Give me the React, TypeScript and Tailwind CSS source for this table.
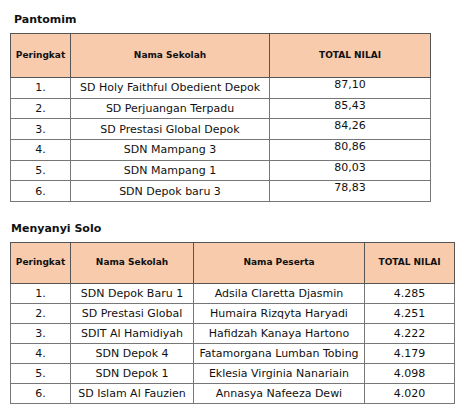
const pantomim = [
  ['1.', 'SD Holy Faithful Obedient Depok', '87,10'],
  ['2.', 'SD Perjuangan Terpadu', '85,43'],
  ['3.', 'SD Prestasi Global Depok', '84,26'],
  ['4.', 'SDN Mampang 3', '80,86'],
  ['5.', 'SDN Mampang 1', '80,03'],
  ['6.', 'SDN Depok baru 3', '78,83'],
]

const solo = [
  ['1.', 'SDN Depok Baru 1', 'Adsila Claretta Djasmin', '4.285'],
  ['2.', 'SD Prestasi Global', 'Humaira Rizqyta Haryadi', '4.251'],
  ['3.', 'SDIT Al Hamidiyah', 'Hafidzah Kanaya Hartono', '4.222'],
  ['4.', 'SDN Depok 4', 'Fatamorgana Lumban Tobing', '4.179'],
  ['5.', 'SDN Depok 1', 'Eklesia Virginia Nanariain', '4.098'],
  ['6.', 'SD Islam Al Fauzien', 'Annasya Nafeeza Dewi', '4.020'],
]

export default function App() {
  return (
    <div className="w-[467px] h-[418px] bg-white pl-[10px] pt-[13px] text-[#111] font-['DejaVu_Sans',sans-serif] text-[11px]">
      {/* Pantomim */}
      <h2 className="pl-[4px] h-[20px] font-bold text-[11px] leading-[14px]">Pantomim</h2>
      <table className="border-collapse w-[420px] table-fixed">
        <colgroup>
          <col className="w-[60px]" />
          <col className="w-[199px]" />
          <col className="w-[161px]" />
        </colgroup>
        <thead>
          <tr className="h-[44px] bg-[#f8cbad] text-[9px] font-bold">
            <th className="border border-[#555]">Peringkat</th>
            <th className="border border-[#555]">Nama Sekolah</th>
            <th className="border border-[#555]">TOTAL NILAI</th>
          </tr>
        </thead>
        <tbody>
          {pantomim.map((r) => (
            <tr key={r[0]} className="h-[20.7px] text-center">
              <td className="border border-[#777] leading-none">{r[0]}</td>
              <td className="border border-[#777] leading-none">{r[1]}</td>
              <td className="border border-[#777] leading-none align-top pt-[1px]">{r[2]}</td>
            </tr>
          ))}
        </tbody>
      </table>

      {/* Menyanyi Solo */}
      <h2 className="mt-[20px] pl-[1px] h-[20px] font-bold text-[11px] leading-[14px]">Menyanyi Solo</h2>
      <table className="border-collapse w-[444px] table-fixed">
        <colgroup>
          <col className="w-[60px]" />
          <col className="w-[123px]" />
          <col className="w-[171px]" />
          <col className="w-[90px]" />
        </colgroup>
        <thead>
          <tr className="h-[41px] bg-[#f8cbad] text-[9px] font-bold">
            <th className="border border-[#555]">Peringkat</th>
            <th className="border border-[#555]">Nama Sekolah</th>
            <th className="border border-[#555]">Nama Peserta</th>
            <th className="border border-[#555]">TOTAL NILAI</th>
          </tr>
        </thead>
        <tbody>
          {solo.map((r) => (
            <tr key={r[0]} className="h-[20px] text-center">
              <td className="border border-[#777] leading-none">{r[0]}</td>
              <td className="border border-[#777] leading-none">{r[1]}</td>
              <td className="border border-[#777] leading-none">{r[2]}</td>
              <td className="border border-[#777] leading-none">{r[3]}</td>
            </tr>
          ))}
        </tbody>
      </table>
    </div>
  )
}
